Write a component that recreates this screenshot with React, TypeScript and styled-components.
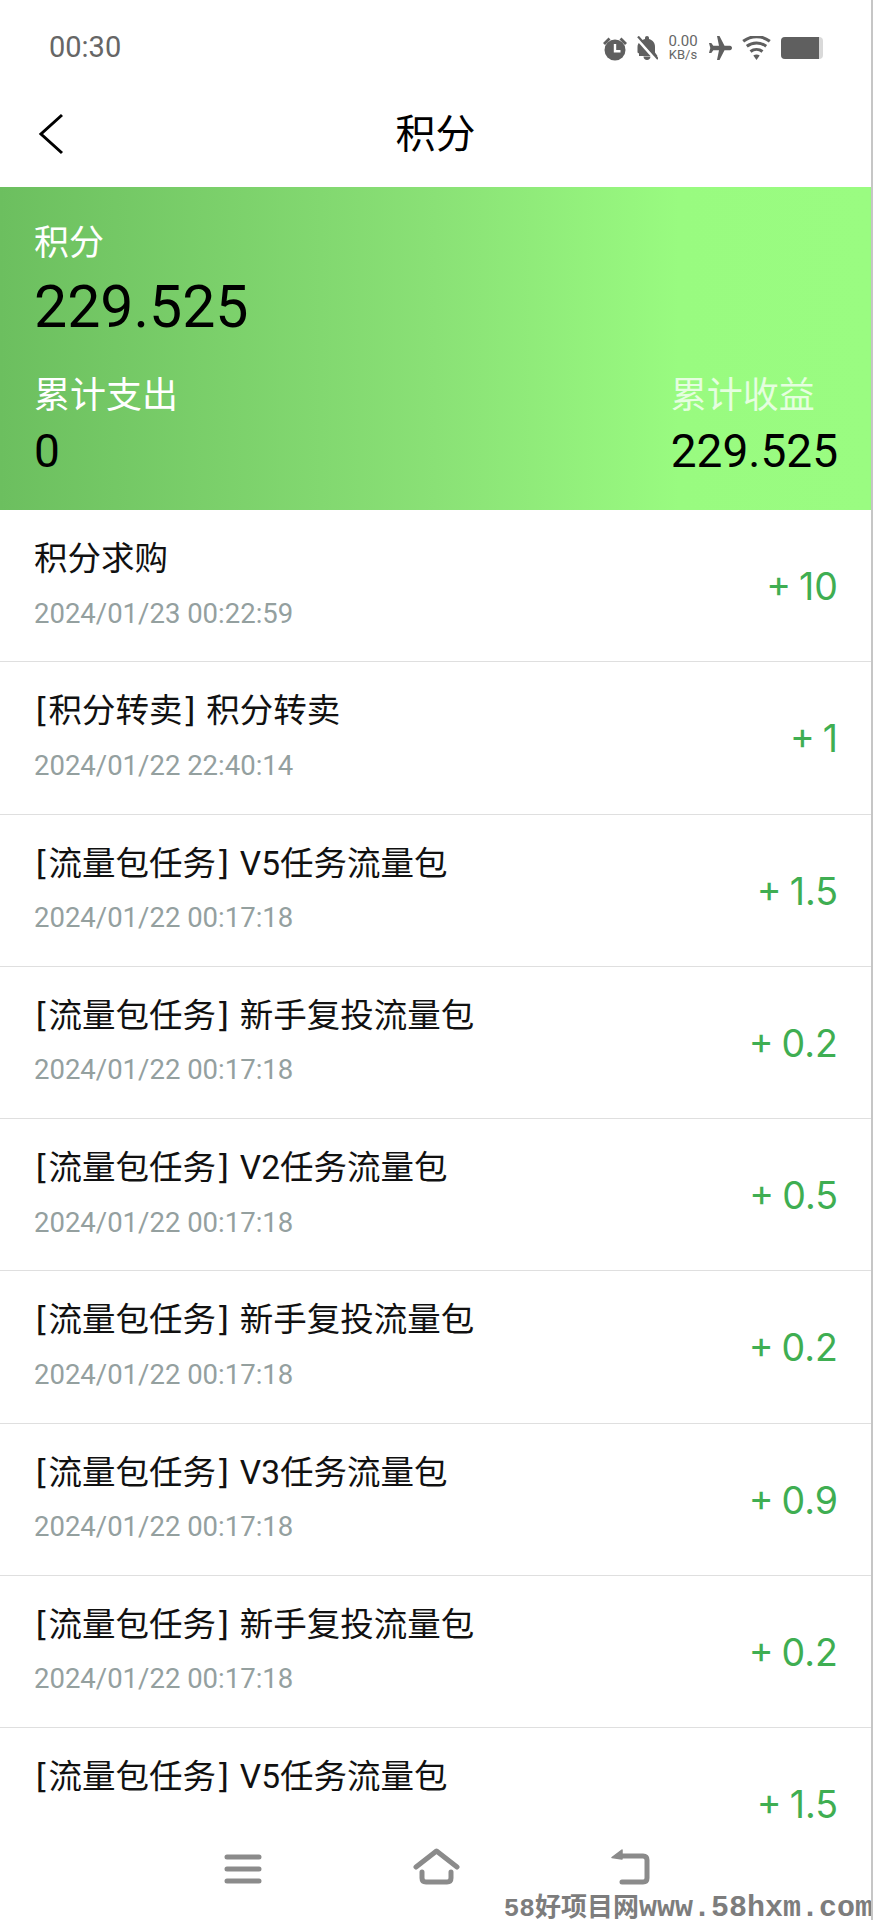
import React from "react";
import styled, { createGlobalStyle } from "styled-components";

const GlobalStyle = createGlobalStyle`
  html, body {
    margin: 0;
    padding: 0;
    background: #fff;
  }
  body {
    font-family: Roboto, "Noto Sans CJK SC", sans-serif;
  }
`;

const Page = styled.div`
  position: relative;
  width: 873px;
  height: 1920px;
  box-sizing: border-box;
  border-right: 2px solid #c6c6c6;
  display: flex;
  flex-direction: column;
  overflow: hidden;
  background: #fff;
`;

const StatusBar = styled.div`
  height: 93px;
  flex-shrink: 0;
  display: flex;
  align-items: flex-start;
  justify-content: space-between;
  padding: 32px 46px 0 49px;
  box-sizing: border-box;
  color: #666;
`;

const Clock = styled.span`
  font-size: 29px;
  line-height: 30px;
`;

const StatusIcons = styled.div`
  display: flex;
  align-items: center;
  height: 28px;
  margin-top: 2px;
`;

const StatusIcon = styled.svg<{ $gap?: number }>`
  display: block;
  margin-right: ${(p) => p.$gap ?? 0}px;
  fill: #5f5f5f;
`;

const Speed = styled.div`
  width: 30px;
  margin-right: 10px;
  text-align: center;
  font-size: 13px;
  line-height: 13px;
  color: #666;
  span {
    display: block;
    white-space: nowrap;
  }
  span:first-child {
    font-size: 15px;
  }
`;

const NavBar = styled.div`
  position: relative;
  height: 94px;
  flex-shrink: 0;
  display: flex;
  align-items: center;
  justify-content: center;
  padding-bottom: 11px;
  box-sizing: border-box;
`;

const BackButton = styled.svg`
  position: absolute;
  left: 38px;
  top: 20px;
`;

const NavTitle = styled.h1`
  margin: 0;
  font-size: 40px;
  font-weight: 400;
  line-height: 48px;
  color: #000;
`;

const Hero = styled.section`
  height: 323px;
  flex-shrink: 0;
  box-sizing: border-box;
  padding: 35px 33px 0 34px;
  display: flex;
  flex-direction: column;
  background: linear-gradient(90deg, #6cbf5f 0%, #8ae176 50%, #99fb80 78%, #9afc81 100%);
`;

const HeroLabel = styled.div`
  font-size: 35px;
  line-height: 44px;
  color: #fff;
`;

const HeroTotal = styled.div`
  margin-top: 6px;
  font-size: 59px;
  line-height: 70px;
  color: #000;
`;

const HeroStats = styled.div`
  margin-top: 31px;
  display: flex;
  justify-content: space-between;
`;

const HeroStat = styled.div`
  display: flex;
  flex-direction: column;
`;

const HeroStatLabel = styled.div<{ $faded?: boolean }>`
  font-size: 36px;
  line-height: 46px;
  color: ${(p) => (p.$faded ? "rgba(255,255,255,0.75)" : "#fff")};
`;

const HeroStatValue = styled.div`
  margin-top: 6px;
  font-size: 46px;
  line-height: 52px;
  color: #000;
`;

const List = styled.div`
  flex: 1;
  min-height: 0;
  overflow: hidden;
`;

const Row = styled.div`
  height: 152.25px;
  box-sizing: border-box;
  padding: 0 33px 0 34px;
  display: flex;
  align-items: center;
  justify-content: space-between;
  border-bottom: 1.5px solid #dfdfdf;
`;

const RowText = styled.div`
  display: flex;
  flex-direction: column;
  margin-top: -5.5px;
`;

const RowTitle = styled.div`
  font-size: 33.5px;
  line-height: 46px;
  color: #111;
`;

const RowTag = styled.span`
  margin-left: 1.5px;
  font-family: "DejaVu Sans", "Noto Sans CJK SC", sans-serif;
`;

const RowDate = styled.div`
  margin-top: 15.5px;
  font-size: 27.5px;
  line-height: 32px;
  color: #94a09f;
`;

const RowAmount = styled.div`
  margin-top: 3px;
  font-family: Inter, sans-serif;
  font-size: 37.5px;
  font-weight: 400;
  line-height: 44px;
  color: #3fae52;
  word-spacing: -2.5px;
`;

const BottomBar = styled.div`
  height: 101px;
  flex-shrink: 0;
  background: #fff;
  display: flex;
  align-items: flex-start;
  padding: 28px 0 0 224px;
  box-sizing: border-box;
`;

const BottomIcon = styled.svg<{ $gap?: number }>`
  display: block;
  margin-right: ${(p) => p.$gap ?? 0}px;
  fill: none;
  stroke: #8b8b8b;
  stroke-width: 5;
  stroke-linecap: round;
  stroke-linejoin: round;
`;

const Watermark = styled.div`
  position: absolute;
  right: -2px;
  bottom: -4px;
  font-family: "Liberation Mono", monospace;
  font-size: 30px;
  line-height: 30px;
  font-weight: 700;
  color: #7d7d7d;
  white-space: nowrap;
`;

const WatermarkCn = styled.span`
  font-family: "Liberation Mono", "Noto Sans CJK SC", sans-serif;
  font-size: 26px;
`;

type Entry = { tag?: string; title: string; date: string; amount: string };

const entries: Entry[] = [
  { title: "积分求购", date: "2024/01/23 00:22:59", amount: "+ 10" },
  { tag: "[积分转卖]", title: "积分转卖", date: "2024/01/22 22:40:14", amount: "+ 1" },
  { tag: "[流量包任务]", title: "V5任务流量包", date: "2024/01/22 00:17:18", amount: "+ 1.5" },
  { tag: "[流量包任务]", title: "新手复投流量包", date: "2024/01/22 00:17:18", amount: "+ 0.2" },
  { tag: "[流量包任务]", title: "V2任务流量包", date: "2024/01/22 00:17:18", amount: "+ 0.5" },
  { tag: "[流量包任务]", title: "新手复投流量包", date: "2024/01/22 00:17:18", amount: "+ 0.2" },
  { tag: "[流量包任务]", title: "V3任务流量包", date: "2024/01/22 00:17:18", amount: "+ 0.9" },
  { tag: "[流量包任务]", title: "新手复投流量包", date: "2024/01/22 00:17:18", amount: "+ 0.2" },
  { tag: "[流量包任务]", title: "V5任务流量包", date: "2024/01/22 00:17:18", amount: "+ 1.5" },
];

const App = () => {
  return (
    <Page>
      <GlobalStyle />
      <StatusBar>
        <Clock>00:30</Clock>
        <StatusIcons>
          <StatusIcon $gap={9} width="24" height="25" viewBox="0 0 24 25">
            <circle cx="12" cy="14" r="10.500" />
            <path d="M0 7 5.500 1.500 7.500 3.500 2 9zM24 7 18.500 1.500 16.500 3.500 22 9z" />
            <path d="M10.800 8h2.400v6h4.300v2.400h-6.700z" fill="#fff" />
          </StatusIcon>
          <StatusIcon $gap={10} width="22" height="24" viewBox="0 0 22 24">
            <path d="M11 0c1.200 0 2 .8 2 2v1C17 4 19 7.200 19 11v5.500l2.500 3.500H3V17.500l-1.500-1V11C1.500 7.200 5 4 9 3V2c0-1.200.8-2 2-2zM7.500 20.500h7c0 2-1.500 3.500-3.500 3.500s-3.500-1.500-3.500-3.500z" />
            <path d="M0 1.500 20 24" stroke="#fff" strokeWidth="3" />
            <path d="M2 .5 22 23" stroke="#5f5f5f" strokeWidth="2.200" />
          </StatusIcon>
          <Speed>
            <span>0.00</span>
            <span>KB/s</span>
          </Speed>
          <StatusIcon $gap={10} width="24" height="24" viewBox="0 0 24 24">
            <path d="M9 0h2.500l5 9.800H22c1.100 0 2 1 2 2.200s-.9 2.200-2 2.200h-5.500l-5 9.800H9l2-9.800H5.300l-2 2.800H1l1.300-5-1.300-5h2.300l2 2.800H11z" />
          </StatusIcon>
          <StatusIcon $gap={10} width="29" height="24" viewBox="0 0 29 24">
            <path d="M14.500 24 11.300 19.500c2-1.200 4.400-1.200 6.400 0z" />
            <path
              d="M8.500 15.500c3.500-2.700 8.500-2.700 12 0M4.800 10.300c5.700-4.400 13.700-4.400 19.400 0M1.200 5.300c8-6.200 18.600-6.200 26.600 0"
              fill="none"
              stroke="#5f5f5f"
              strokeWidth="3"
            />
          </StatusIcon>
          <StatusIcon width="44" height="22" viewBox="0 0 44 22">
            <rect x="0" y="0" width="42" height="22" rx="4" fill="#d9d9d9" />
            <path d="M4 0h34v22H4a4 4 0 0 1-4-4V4a4 4 0 0 1 4-4z" />
          </StatusIcon>
        </StatusIcons>
      </StatusBar>

      <NavBar>
        <BackButton width="28" height="42" viewBox="0 0 28 42">
          <path d="M24 2 3 21l21 19" fill="none" stroke="#000" strokeWidth="3" />
        </BackButton>
        <NavTitle>积分</NavTitle>
      </NavBar>

      <Hero>
        <HeroLabel>积分</HeroLabel>
        <HeroTotal>229.525</HeroTotal>
        <HeroStats>
          <HeroStat>
            <HeroStatLabel>累计支出</HeroStatLabel>
            <HeroStatValue>0</HeroStatValue>
          </HeroStat>
          <HeroStat>
            <HeroStatLabel $faded>累计收益</HeroStatLabel>
            <HeroStatValue>229.525</HeroStatValue>
          </HeroStat>
        </HeroStats>
      </Hero>

      <List>
        {entries.map((entry, i) => (
          <Row key={i}>
            <RowText>
              <RowTitle>
                {entry.tag && <RowTag>{entry.tag} </RowTag>}
                {entry.title}
              </RowTitle>
              <RowDate>{entry.date}</RowDate>
            </RowText>
            <RowAmount>{entry.amount}</RowAmount>
          </Row>
        ))}
      </List>

      <BottomBar>
        <BottomIcon $gap={151} width="38" height="40" viewBox="0 0 38 40">
          <path d="M3 10h32M3 22h32M3 34h32" />
        </BottomIcon>
        <BottomIcon $gap={150} width="48" height="40" viewBox="0 0 48 40">
          <path d="M3 20 23.500 4 44 20M9 25v6q0 4 4 4h21q4 0 4-4v-6" />
        </BottomIcon>
        <BottomIcon width="40" height="40" viewBox="0 0 40 40">
          <path d="M8 9h24q4 0 4 4v18q0 4-4 4H11" />
          <path d="M1 10.500 11 3v9z" fill="#8b8b8b" strokeWidth="1.500" />
        </BottomIcon>
      </BottomBar>

      <Watermark>
        <WatermarkCn>58好项目网</WatermarkCn>www.58hxm.com
      </Watermark>
    </Page>
  );
};

export default App;
